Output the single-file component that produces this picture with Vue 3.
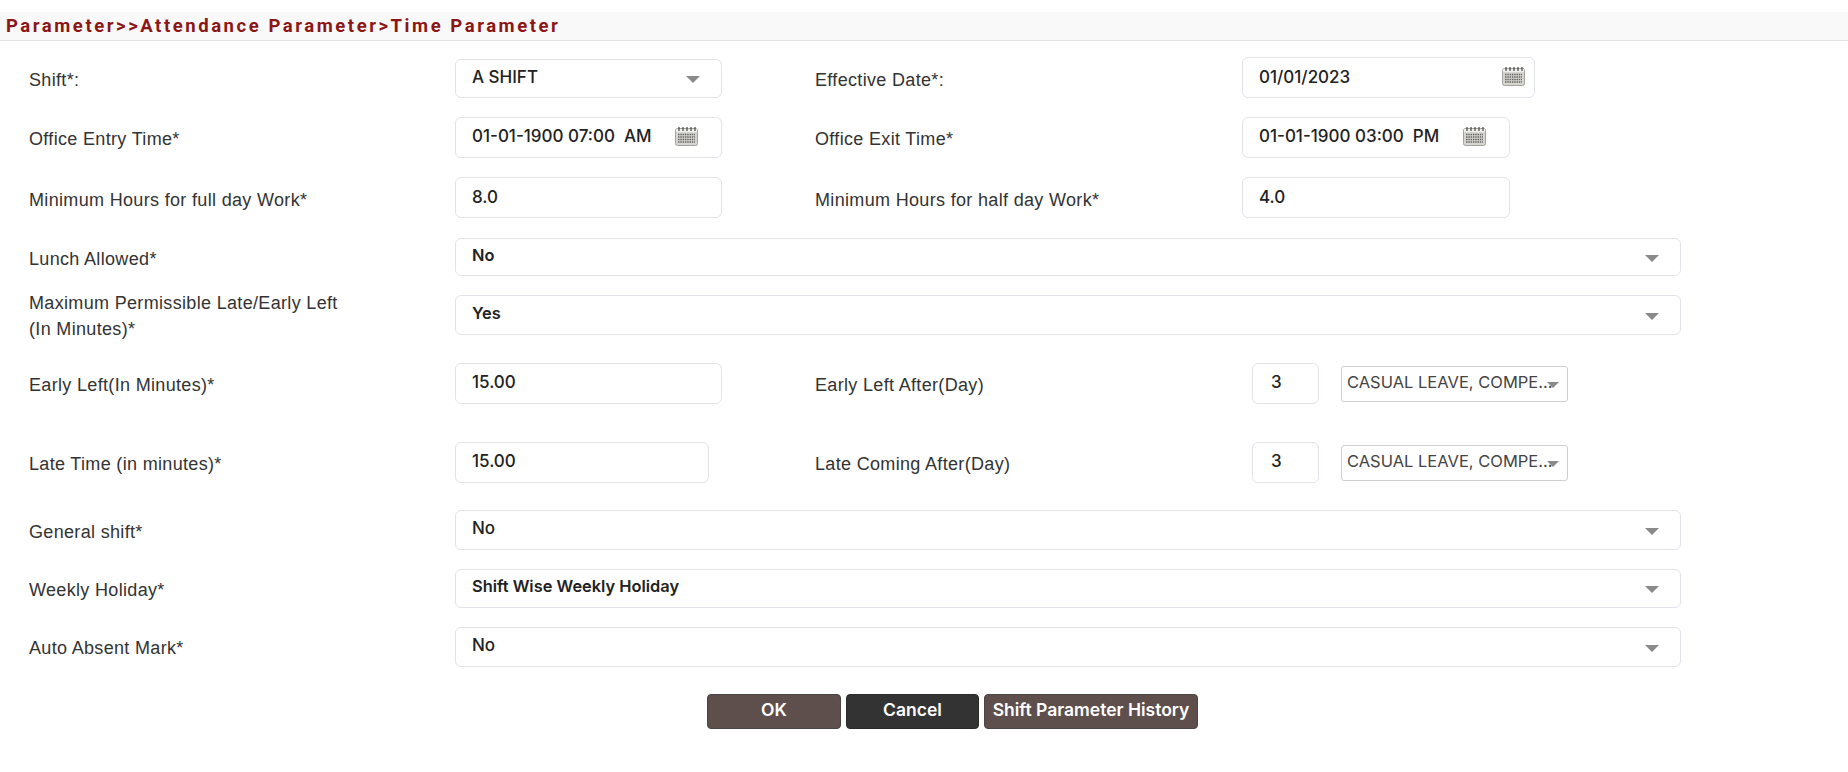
<script setup>
const leave = 'CASUAL LEAVE, COMPE...'
</script>

<template>
  <div class="page">
    <div class="crumb">Parameter&gt;&gt;Attendance Parameter&gt;Time Parameter</div>
    <div class="form">
      <div class="row">
        <label class="lbl">Shift*:</label>
        <div class="box sel w267 first"><span>A SHIFT</span><i class="arrow"></i></div>
        <label class="lbl">Effective Date*:</label>
        <div class="box date-eff">
          <span>01/01/2023</span>
          <svg class="cal" viewBox="0 0 23 20"><use href="#cal-icon" /></svg>
        </div>
      </div>
      <div class="row t">
        <label class="lbl">Office Entry Time*</label>
        <div class="box tall w267 timebox">
          <span>01-01-1900 07:00&nbsp; AM</span>
          <svg class="cal" viewBox="0 0 23 20"><use href="#cal-icon" /></svg>
        </div>
        <label class="lbl">Office Exit Time*</label>
        <div class="box tall w268 timebox">
          <span>01-01-1900 03:00&nbsp; PM</span>
          <svg class="cal" viewBox="0 0 23 20"><use href="#cal-icon" /></svg>
        </div>
      </div>
      <div class="row t mins">
        <label class="lbl">Minimum Hours for full day Work*</label>
        <div class="box tall w267"><span>8.0</span></div>
        <label class="lbl">Minimum Hours for half day Work*</label>
        <div class="box tall w268"><span>4.0</span></div>
      </div>
      <div class="row">
        <label class="lbl">Lunch Allowed*</label>
        <div class="box wide sel h38"><span class="b">No</span><i class="arrow"></i></div>
      </div>
      <div class="row">
        <label class="lbl two">Maximum Permissible Late/Early Left<br />(In Minutes)*</label>
        <div class="box wide sel h40"><span class="b">Yes</span><i class="arrow"></i></div>
      </div>
      <div class="row t">
        <label class="lbl">Early Left(In Minutes)*</label>
        <div class="box tall w267"><span>15.00</span></div>
        <label class="lbl">Early Left After(Day)</label>
        <div class="pair">
          <div class="box tall small"><span>3</span></div>
          <div class="multi"><span>{{ leave }}</span><i class="arrow mini"></i></div>
        </div>
      </div>
      <div class="row t">
        <label class="lbl">Late Time (in minutes)*</label>
        <div class="box tall w254"><span>15.00</span></div>
        <label class="lbl">Late Coming After(Day)</label>
        <div class="pair">
          <div class="box tall small"><span>3</span></div>
          <div class="multi"><span>{{ leave }}</span><i class="arrow mini"></i></div>
        </div>
      </div>
      <div class="row t">
        <label class="lbl">General shift*</label>
        <div class="box wide sel h40"><span>No</span><i class="arrow"></i></div>
      </div>
      <div class="row">
        <label class="lbl">Weekly Holiday*</label>
        <div class="box wide sel h39"><span class="b">Shift Wise Weekly Holiday</span><i class="arrow"></i></div>
      </div>
      <div class="row">
        <label class="lbl">Auto Absent Mark*</label>
        <div class="box wide sel h40"><span>No</span><i class="arrow"></i></div>
      </div>
    </div>
    <div class="actions">
      <button class="btn brown w134">OK</button>
      <button class="btn dark w133">Cancel</button>
      <button class="btn brown w214">Shift Parameter History</button>
    </div>
    <svg class="defs" width="0" height="0">
      <defs>
        <g id="cal-icon">
          <rect x="0.5" y="2.5" width="22" height="17" rx="2" fill="#d6d5d0" stroke="#a3a3a0" />
          <rect x="1" y="3" width="21" height="3" fill="#efefec" />
          <path d="M4 1v4M8 1v4M12 1v4M16 1v4M20 1v4" stroke="#444" stroke-width="1.2" />
          <path d="M3 8.5h17M3 11h17M3 13.5h17M3 16h17" stroke="#666" stroke-width="1.3" stroke-dasharray="1.5 .8" />
        </g>
      </defs>
    </svg>
  </div>
</template>

<style>
html, body { background: #fff; }
</style>

<style scoped>
.page {
  width: 1848px;
  height: 772px;
  padding-top: 12px;
  box-sizing: border-box;
  background: #fff;
  overflow: hidden;
  position: relative;
}
.crumb {
  height: 28px;
  border-bottom: 1px solid #e2e3e8;
  background: #f9f9f9;
  padding-left: 6px;
  color: #8c1515;
  font: 700 18.5px/28px Roboto, "Liberation Sans", Arial, sans-serif;
  letter-spacing: 2.55px;
}
.form {
  display: grid;
  grid-template-rows: 58px 60px 61px 57px 68px 79px 68px 59px 58px 40px;
  padding-top: 18px;
}
.row {
  display: grid;
  grid-template-columns: 455px 331px 456px 1fr;
  align-items: start;
}
.lbl {
  padding-left: 29px;
  padding-top: 9px;
  color: #333;
  font: 400 18px/24px "Liberation Sans", Arial, sans-serif;
  letter-spacing: 0.33px;
  white-space: nowrap;
}
.row.t .lbl { padding-top: 10px; }
.row.mins .lbl { padding-top: 11px; }
.lbl.two { padding-top: 0; line-height: 26px; margin-top: -5px; }
.box {
  box-sizing: border-box;
  height: 39px;
  border: 1px solid #e1e3ea;
  border-radius: 6px;
  background: #fff;
  padding: 0 16px;
  display: flex;
  align-items: center;
  justify-content: space-between;
  color: #222;
  font: 500 17px/1 Inter, "Liberation Sans", sans-serif;
}
.box > span { position: relative; top: -2px; white-space: nowrap; }
.box.tall > span { top: -1px; }
.box.first > span { top: -1px; }
.row.mins .box > span { top: 0; }
.b { font-weight: 600; font-size: 16.4px; }
.w267 { width: 267px; }
.w268 { width: 268px; }
.w254 { width: 254px; }
.tall { height: 41px; }
.h38 { height: 38px; }
.h39 { height: 39px; }
.h40 { height: 40px; }
.wide { grid-column: 2 / 5; width: 1226px; }
.date-eff { width: 293px; height: 41px; margin-top: -2px; padding-right: 9px; }
.date-eff > span { top: 0; }
.timebox { padding-right: 23px; }
.cal { width: 23px; height: 20px; flex: none; position: relative; top: -2px; }
.sel { padding-right: 21px; }
.arrow {
  width: 0;
  height: 0;
  flex: none;
  border-left: 7px solid transparent;
  border-right: 7px solid transparent;
  border-top: 7px solid #8a8a8a;
  position: relative;
  top: 1px;
}
.pair { display: flex; align-items: flex-start; margin-left: 10px; }
.small { width: 67px; padding-left: 18px; }
.multi {
  box-sizing: border-box;
  width: 227px;
  height: 36px;
  margin: 3px 0 0 22px;
  border: 1px solid #cfcfcf;
  border-radius: 3px;
  padding-left: 5px;
  display: flex;
  align-items: center;
  position: relative;
  color: #444;
  font: 400 16.5px/1 Inter, "Liberation Sans", sans-serif;
  white-space: nowrap;
  overflow: hidden;
}
.multi > span { position: relative; top: -2px; }
.arrow.mini {
  position: absolute;
  right: 8px;
  top: 15px;
  border-left-width: 6px;
  border-right-width: 6px;
  border-top-width: 6px;
}
.actions {
  display: flex;
  gap: 5px;
  padding-left: 707px;
  margin-top: 27px;
}
.btn {
  height: 35px;
  box-sizing: border-box;
  border: 1px solid #4a4444;
  border-radius: 4px;
  color: #fff;
  padding: 0 0 3px;
  font: 600 17.5px/1 Inter, "Liberation Sans", sans-serif;
  white-space: nowrap;
}
.brown { background: #5e4f4d; }
.dark { background: #333; border-color: #2a2a2a; }
.w134 { width: 134px; }
.w133 { width: 133px; }
.w214 { width: 214px; }
.defs { position: absolute; }
</style>
